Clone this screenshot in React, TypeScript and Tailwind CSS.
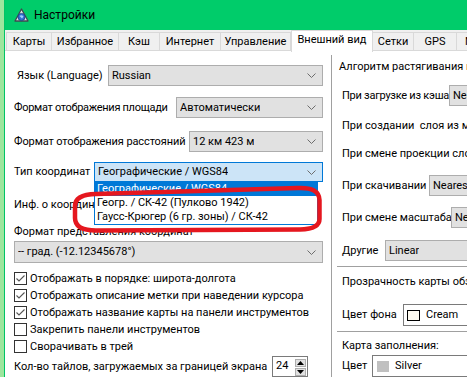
import React from "react";

function Chevron() {
  return (
    <svg width="9" height="5" viewBox="0 0 9 5" className="shrink-0">
      <path d="M0.5 0.5 L4.5 4.5 L8.5 0.5" stroke="#6d6d6d" strokeWidth="1" fill="none" />
    </svg>
  );
}

function Combo({ text, className, focused }: { text: string; className: string; focused?: boolean }) {
  return (
    <div
      className={`flex items-center justify-between pl-[3px] pr-[6px] border shrink-0 ${
        focused ? "border-[#0078d7] bg-[#cce4f7]" : "border-[#adadad] bg-[#e1e1e1]"
      } ${className}`}
    >
      <span className="whitespace-nowrap overflow-hidden">{text}</span>
      <Chevron />
    </div>
  );
}

function Check({ checked, label }: { checked: boolean; label: string }) {
  return (
    <div className="h-[17px] flex items-center">
      <div className="w-[13px] h-[13px] border border-[#333333] bg-white flex items-center justify-center shrink-0">
        {checked && (
          <svg width="11" height="11" viewBox="0 0 11 11">
            <path d="M1.5 5.5 L4 8 L9.5 2.5" stroke="#555555" strokeWidth="1.1" fill="none" />
          </svg>
        )}
      </div>
      <span className="ml-[3px] whitespace-nowrap">{label}</span>
    </div>
  );
}

const tabs = [
  { t: "Карты", w: "w-[46px]" },
  { t: "Избранное", w: "w-[67px]" },
  { t: "Кэш", w: "w-[41px]" },
  { t: "Интернет", w: "w-[61px]" },
  { t: "Управление", w: "w-[70px]" },
  { t: "Внешний вид", w: "w-[82px]", sel: true },
  { t: "Сетки", w: "w-[41px]" },
  { t: "GPS", w: "w-[43px]" },
  { t: "Метки", w: "w-[50px]" },
];

export default function App() {
  return (
    <div className="relative w-[467px] h-[377px] overflow-hidden flex bg-[#9ee69e] text-[11px] leading-[14px] text-black font-['Roboto',sans-serif]">
      <div className="w-[4px] shrink-0 bg-[#9ee69e]" />
      <div className="flex-1 min-w-0 flex flex-col border-l border-[#00c466]">
        {/* title bar */}
        <div className="h-[30px] shrink-0 bg-[#00cc6a] flex items-center">
          <svg width="15" height="14" viewBox="0 0 15 14" className="ml-[9px]">
            <path d="M7.5 1 L14 13 L1 13 Z" fill="#e8ece8" stroke="#404850" strokeWidth="1.3" strokeLinejoin="round" />
            <circle cx="7.5" cy="9" r="3.6" fill="#2f6fd0" stroke="#1a3f80" strokeWidth="0.8" />
            <path d="M5.5 8 Q7.5 6.5 9.5 8.5 L8 10.5 Z" fill="#9fd0ff" />
          </svg>
          <span className="ml-[5px] whitespace-nowrap text-[12px]">Настройки</span>
        </div>
        {/* tabs */}
        <div className="h-[20px] shrink-0 bg-[#f0f0f0] flex items-end pl-[1px] relative z-10">
          {tabs.map((t) =>
            t.sel ? (
              <div
                key={t.t}
                className={`${t.w} h-[22px] -mb-[2px] shrink-0 bg-white border border-b-0 border-[#d9d9d9] flex items-center justify-center whitespace-nowrap pb-[3px]`}
              >
                {t.t}
              </div>
            ) : (
              <div
                key={t.t}
                className={`${t.w} h-[18px] shrink-0 bg-[#f0f0f0] border border-b-0 border-l-0 border-[#d9d9d9] first:border-l flex items-center justify-center whitespace-nowrap`}
              >
                {t.t}
              </div>
            )
          )}
        </div>
        {/* content */}
        <div className="flex-1 bg-white border-t border-[#d9d9d9] flex min-h-0">
          {/* left column */}
          <div className="w-[326px] shrink-0 flex flex-col pl-[9px] pr-[8px] pt-[14px]">
            <div className="h-[21px] flex items-center justify-between">
              <span className="pl-[3px] whitespace-nowrap">Язык (Language)</span>
              <Combo text="Russian" className="w-[215px] h-[21px]" />
            </div>
            <div className="h-[21px] mt-[11px] flex items-center justify-between">
              <span className="whitespace-nowrap tracking-[-0.3px]">Формат отображения площади</span>
              <Combo text="Автоматически" className="w-[147px] h-[21px]" />
            </div>
            <div className="h-[21px] mt-[13px] flex items-center justify-between">
              <span className="whitespace-nowrap tracking-[-0.1px]">Формат отображения расстояний</span>
              <Combo text="12 км 423 м" className="w-[134px] h-[21px]" />
            </div>
            <div className="h-[20px] mt-[10px] flex items-center justify-between">
              <span className="whitespace-nowrap">Тип координат</span>
              <Combo text="Географические / WGS84" className="w-[229px] h-[20px]" focused />
            </div>
            <div className="h-[21px] mt-[14px] flex items-center">
              <span className="whitespace-nowrap w-[80px] overflow-hidden">Инф. о координатах</span>
            </div>
            <div className="h-[14px] mt-[12px] flex items-center">
              <span className="whitespace-nowrap">Формат представления координат</span>
            </div>
            <Combo text="-- град. (-12.12345678°)" className="w-[309px] h-[22px] mt-[2px]" />
            <div className="mt-[7px] flex flex-col">
              <Check checked label="Отображать в порядке: широта-долгота" />
              <Check checked label="Отображать описание метки при наведении курсора" />
              <Check checked label="Отображать название карты на панели инструментов" />
              <Check checked={false} label="Закрепить панели инструментов" />
              <Check checked={false} label="Сворачивать в трей" />
            </div>
            <div className="h-[21px] mt-[1px] flex items-center">
              <span className="whitespace-nowrap w-[258px] shrink-0">Кол-во тайлов, загружаемых за границей экрана</span>
              <div className="w-[36px] h-[21px] border border-[#7a7a7a] bg-white flex items-start justify-between pl-[3px] pr-[1px] pt-[2px]">
                <span>24</span>
                <div className="flex flex-col gap-[1px]">
                  <div className="w-[11px] h-[8px] bg-[#e1e1e1] border border-[#adadad] flex items-center justify-center">
                    <svg width="7" height="4" viewBox="0 0 7 4"><path d="M0 4 L3.5 0 L7 4 Z" fill="#000" /></svg>
                  </div>
                  <div className="w-[11px] h-[8px] bg-[#e1e1e1] border border-[#adadad] flex items-center justify-center">
                    <svg width="7" height="4" viewBox="0 0 7 4"><path d="M0 0 L3.5 4 L7 0 Z" fill="#000" /></svg>
                  </div>
                </div>
              </div>
            </div>
          </div>
          {/* separator */}
          <div className="w-[2px] shrink-0 mt-[4px] border-l border-[#a0a0a0] bg-white" />
          {/* right column */}
          <div className="flex-1 min-w-0 flex flex-col pl-[6px] pt-[9px] whitespace-nowrap">
            <div className="h-[14px] flex items-center">Алгоритм растягивания изображения</div>
            <div className="h-[21px] mt-[11px] flex items-center pl-[3px]">
              <span className="w-[107px] shrink-0 tracking-[-0.25px]">При загрузке из кэша</span>
              <Combo text="Nearest" className="w-[150px] h-[21px]" />
            </div>
            <div className="h-[21px] mt-[11px] flex items-center pl-[3px]">При создании&nbsp; слоя из меток</div>
            <div className="h-[21px] mt-[11px] flex items-center pl-[3px]">При смене проекции слоя</div>
            <div className="h-[21px] mt-[12px] flex items-center pl-[3px]">
              <span className="w-[87px] shrink-0">При скачивании</span>
              <Combo text="Nearest" className="w-[150px] h-[21px]" />
            </div>
            <div className="h-[21px] mt-[11px] flex items-center pl-[3px]">
              <span className="w-[109px] shrink-0">При смене масштаба</span>
              <Combo text="Nearest" className="w-[150px] h-[21px]" />
            </div>
            <div className="h-[21px] mt-[12px] flex items-center pl-[3px]">
              <span className="w-[43px] shrink-0">Другие</span>
              <Combo text="Linear" className="w-[150px] h-[21px]" />
            </div>
            <div className="h-px mt-[5px] -ml-[2px] bg-[#a0a0a0] shrink-0" />
            <div className="h-[14px] mt-[8px] flex items-center pl-[3px]">Прозрачность карты обзора</div>
            <div className="h-[22px] mt-[15px] flex items-center pl-[3px]">
              <span className="w-[61px] shrink-0">Цвет фона</span>
              <div className="w-[150px] h-[22px] shrink-0 border border-[#7a7a7a] bg-white flex items-center pl-[3px]">
                <div className="w-[13px] h-[11px] border border-black bg-[#fffbf0]" />
                <span className="ml-[6px]">Cream</span>
              </div>
            </div>
            <div className="h-px mt-[5px] -ml-[2px] bg-[#a0a0a0] shrink-0" />
            <div className="h-[14px] mt-[7px] flex items-center pl-[3px]">Карта заполнения:</div>
            <div className="h-[22px] mt-[2px] flex items-center pl-[3px]">
              <span className="w-[30px] shrink-0">Цвет</span>
              <div className="w-[150px] h-[22px] shrink-0 border border-[#7a7a7a] bg-white flex items-center pl-[4px]">
                <div className="w-[12px] h-[11px] bg-[#c0c0c0]" />
                <span className="ml-[6px]">Silver</span>
              </div>
            </div>
          </div>
        </div>
      </div>

      {/* open dropdown list */}
      <div className="absolute left-[94px] top-[181px] w-[224px] border border-[#0078d7] bg-white flex flex-col z-20">
        <div className="h-[14px] bg-[#0078d7] text-white pl-[2px] whitespace-nowrap flex items-center">Географические / WGS84</div>
        <div className="h-[14px] pl-[2px] whitespace-nowrap flex items-center">Геогр. / СК-42 (Пулково 1942)</div>
        <div className="h-[14px] pl-[2px] whitespace-nowrap flex items-center">Гаусс-Крюгер (6 гр. зоны) / СК-42</div>
      </div>

      {/* red annotation */}
      <svg className="absolute left-0 top-0 z-30 pointer-events-none" width="467" height="377" viewBox="0 0 467 377">
        <path
          d="M96 194 L298 188 Q319 187 319.5 200 L319.5 219 Q319.5 229 300 229.5 L96 230.5 Q75 230.5 75 218 L75 206 Q75 194.5 96 194 Z"
          stroke="#e5171f"
          strokeWidth="4.5"
          fill="none"
          strokeLinejoin="round"
        />
      </svg>
    </div>
  );
}
